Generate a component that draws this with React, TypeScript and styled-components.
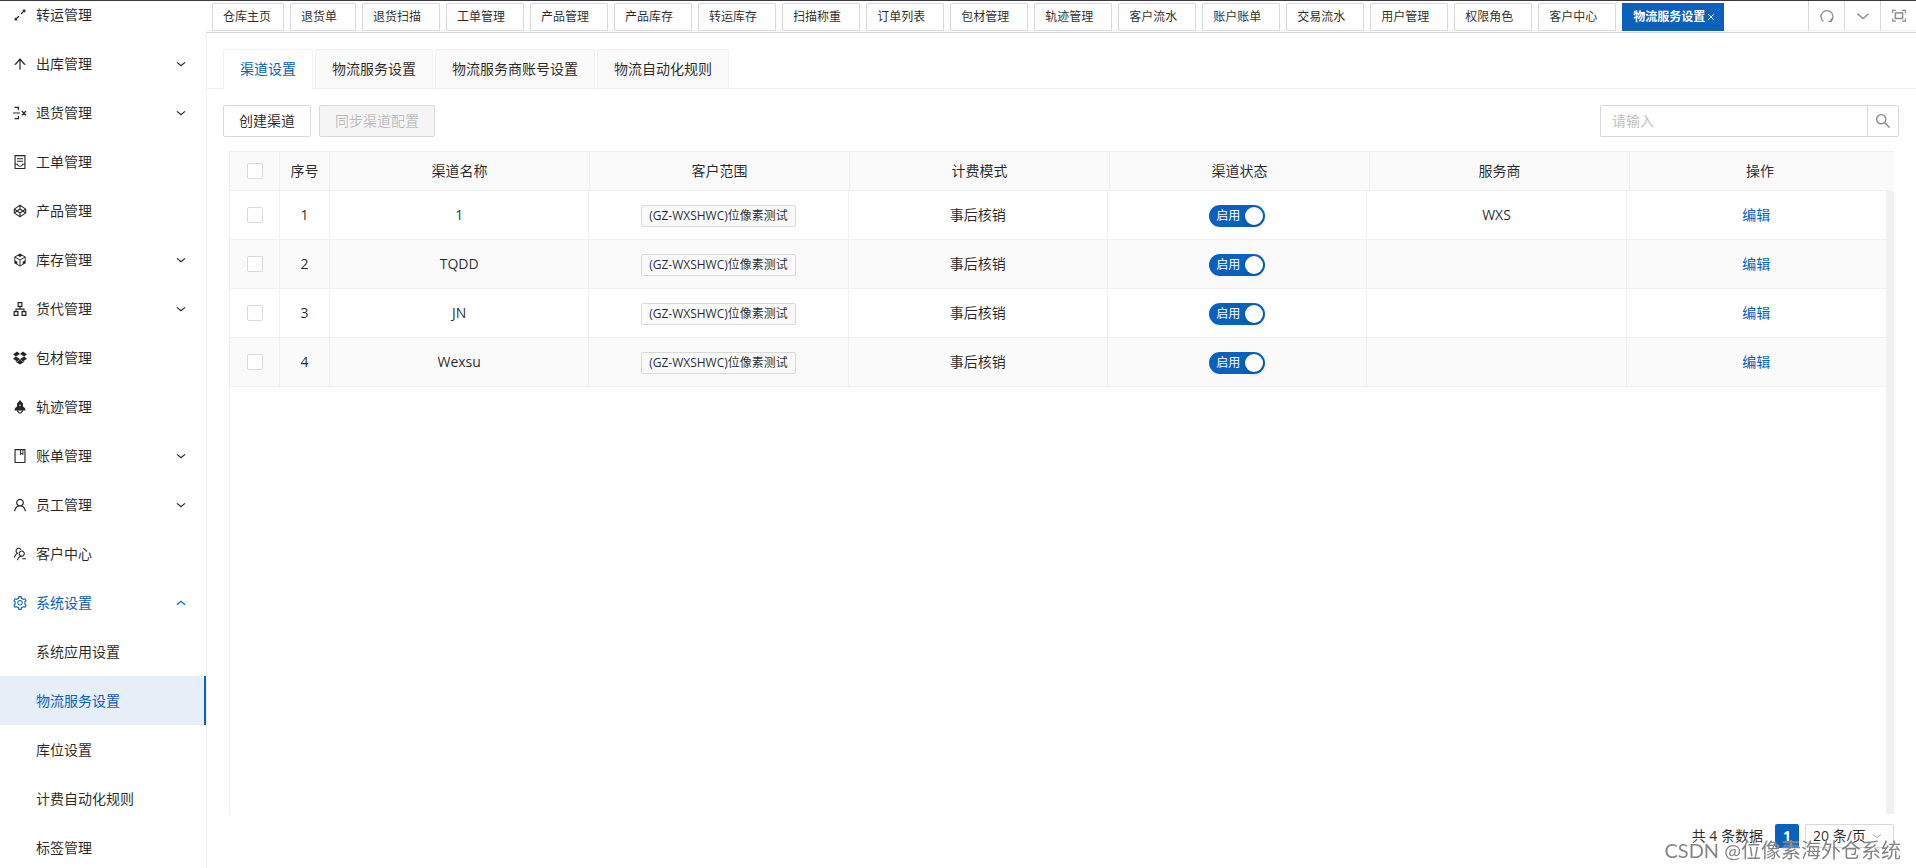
import React, { useState } from 'react';
import styled, { createGlobalStyle, css } from 'styled-components';
import {
  AiFillRocket,
  AiOutlineApartment,
  AiOutlineArrowUp,
  AiOutlineArrowsAlt,
  AiOutlineBook,
  AiOutlineCodeSandbox,
  AiOutlineCodepen,
  AiOutlineContainer,
  AiOutlineDropbox,
  AiOutlineSearch,
  AiOutlineSetting,
  AiOutlineUser,
  AiOutlineUsergroupDelete,
} from 'react-icons/ai';

const primary = '#0960bd';
const textColor = 'rgba(0, 0, 0, 0.85)';
const line = '#f0f0f0';
const border = '#d9d9d9';
const stripe = '#fafafa';

const GlobalStyle = createGlobalStyle`
  *, *::before, *::after { box-sizing: border-box; }
  body {
    margin: 0;
    background: #fff;
    color: ${textColor};
    font-family: "Open Sans", "Noto Sans CJK SC", sans-serif;
    font-size: 14px;
    line-height: 22px;
  }
  button, input, select { font: inherit; color: inherit; margin: 0; }
  a { color: inherit; text-decoration: none; }
  ul { margin: 0; padding: 0; list-style: none; }
`;

const Page = styled.div`
  display: flex;
  height: 100vh;
  overflow: hidden;
  border-top: 1px solid #3a3a44;
`;

/* Sidebar */

const Sidebar = styled.nav`
  flex: 0 0 206px;
  overflow: hidden;
`;

const MenuList = styled.ul`
  margin-top: -11px;
`;

const MenuLink = styled.a<{ $active?: boolean; $open?: boolean }>`
  display: flex;
  align-items: center;
  height: 49px;
  padding: 0 18px 0 12px;
  border-right: 2px solid transparent;
  ${(p) => p.$open && css`color: ${primary};`}
  ${(p) =>
    p.$active &&
    css`
      color: ${primary};
      background: #e6eff8;
      border-right-color: ${primary};
    `}
`;

const MenuIcon = styled.span`
  display: flex;
  width: 24px;
  font-size: 16px;
`;

const MenuText = styled.span`
  flex: 1;
`;

/* Page tags */

const Main = styled.main`
  flex: 1;
  min-width: 0;
  display: flex;
  flex-direction: column;
`;

const TagsBar = styled.div`
  height: 32px;
  flex: none;
  border-bottom: 1px solid ${border};
`;

const TagsNav = styled.div`
  display: flex;
  height: 30px;
  padding-left: 6px;
  border-bottom: 1px solid ${line};
`;

const TagsList = styled.div`
  flex: 1;
  min-width: 0;
  display: flex;
  align-items: flex-end;
  gap: 6px;
  margin-bottom: -1px;
`;

const PageTag = styled.button<{ $fixed?: boolean; $active?: boolean }>`
  display: flex;
  align-items: center;
  flex: none;
  height: 28px;
  padding: 0 ${(p) => (p.$fixed ? 12 : 18)}px 0 10px;
  background: #fff;
  border: 1px solid ${border};
  border-radius: 2px;
  font-size: 12px;
  white-space: nowrap;
  ${(p) =>
    p.$active &&
    css`
      gap: 2px;
      padding: 0 8px 0 10px;
      color: #fff;
      font-weight: 700;
      background: ${primary};
      border-color: ${primary};
      border-radius: 0;
    `}
`;

const BarButton = styled.button`
  display: flex;
  align-items: center;
  justify-content: center;
  width: 36px;
  height: 29px;
  padding: 0;
  color: #8c8c8c;
  background: none;
  border: 0;
  border-left: 1px solid ${border};
`;

/* Content */

const Content = styled.section`
  flex: 1;
  min-height: 0;
  display: flex;
  flex-direction: column;
  padding-top: 16px;
  border-left: 1px solid ${line};
`;

const CardTabs = styled.div`
  display: flex;
  gap: 2px;
  height: 40px;
  padding-left: 16px;
  border-bottom: 1px solid ${line};
`;

const CardTab = styled.button<{ $active?: boolean }>`
  height: 40px;
  padding: 0 16px;
  background: ${(p) => (p.$active ? '#fff' : stripe)};
  color: ${(p) => (p.$active ? primary : 'inherit')};
  border: 1px solid ${line};
  border-bottom-color: ${(p) => (p.$active ? '#fff' : line)};
  border-radius: 2px 2px 0 0;
`;

const Toolbar = styled.div`
  display: flex;
  gap: 8px;
  padding: 16px 17px 14px 16px;
`;

const Button = styled.button`
  height: 32px;
  padding: 0 15px;
  background: #fff;
  border: 1px solid ${border};
  border-radius: 2px;
  &:disabled {
    color: rgba(0, 0, 0, 0.25);
    background: #f5f5f5;
  }
`;

const Search = styled.form`
  display: flex;
  width: 299px;
  height: 32px;
  margin-left: auto;
  border: 1px solid ${border};
  border-radius: 2px;
`;

const SearchInput = styled.input`
  flex: 1;
  min-width: 0;
  padding: 0 11px;
  border: 0;
  outline: 0;
  background: none;
  &::placeholder { color: #bfbfbf; opacity: 1; }
`;

const SearchButton = styled.button`
  display: flex;
  align-items: center;
  justify-content: center;
  width: 31px;
  padding: 0;
  color: #8c8c8c;
  font-size: 18px;
  background: none;
  border: 0;
  border-left: 1px solid ${border};
`;

/* Table */

const TablePanel = styled.div`
  flex: 1;
  min-height: 0;
  display: flex;
  flex-direction: column;
  margin: 0 22px;
  border-left: 1px solid ${line};
`;

const TableHead = styled.div`
  padding-right: 4px;
  background: ${stripe};
  border-top: 1px solid ${line};
`;

const TableBody = styled.div`
  flex: 1;
  min-height: 0;
  display: flex;
  align-items: flex-start;
`;

const ScrollTrack = styled.div`
  flex: none;
  align-self: stretch;
  width: 8px;
  background: #f1f1f1;
`;

const Table = styled.table`
  flex: 1;
  width: 100%;
  table-layout: fixed;
  border-collapse: separate;
  border-spacing: 0;
`;

const NarrowCol = styled.col`
  width: 50px;
`;

const HeadCell = styled.th`
  height: 39px;
  padding: 0;
  font-weight: 400;
  border-bottom: 1px solid ${line};
  border-right: 1px solid ${line};
  &:last-child { border-right: 0; }
`;

const Row = styled.tr`
  &:nth-child(even) { background: ${stripe}; }
`;

const Cell = styled.td`
  height: 49px;
  padding: 0;
  text-align: center;
  border-bottom: 1px solid ${line};
  border-right: 1px solid ${line};
  &:last-child { border-right: 0; }
`;

const Checkbox = styled.input`
  display: block;
  width: 16px;
  height: 16px;
  margin: 0 auto;
  appearance: none;
  background: #fff;
  border: 1px solid ${border};
  border-radius: 2px;
  &:checked { background: ${primary}; border-color: ${primary}; }
`;

const Tag = styled.span`
  display: inline-block;
  height: 22px;
  padding: 0 7px;
  font-size: 12px;
  line-height: 20px;
  white-space: nowrap;
  vertical-align: middle;
  background: ${stripe};
  border: 1px solid ${border};
  border-radius: 2px;
`;

const SwitchLabel = styled.label<{ $on: boolean }>`
  display: inline-flex;
  flex-direction: ${(p) => (p.$on ? 'row' : 'row-reverse')};
  align-items: center;
  justify-content: space-between;
  width: 56px;
  height: 22px;
  padding: ${(p) => (p.$on ? '0 2px 0 7px' : '0 7px 0 2px')};
  color: #fff;
  font-size: 12px;
  vertical-align: middle;
  background: ${(p) => (p.$on ? primary : 'rgba(0, 0, 0, 0.25)')};
  border-radius: 11px;
`;

const SwitchKnob = styled.input`
  width: 18px;
  height: 18px;
  appearance: none;
  background: #fff;
  border-radius: 9px;
  box-shadow: 0 2px 4px rgba(0, 35, 11, 0.2);
`;

const EditLink = styled.a`
  color: ${primary};
`;

/* Pagination */

const Pagination = styled.footer`
  display: flex;
  align-items: center;
  justify-content: flex-end;
  padding: 10px 22px 20px;
`;

const PageButton = styled.button`
  width: 24px;
  height: 24px;
  margin: 0 6px 0 12px;
  padding: 0;
  color: #fff;
  font-weight: 700;
  background: ${primary};
  border: 0;
  border-radius: 2px;
`;

const SizeBox = styled.div`
  display: flex;
  align-items: center;
  width: 89px;
  height: 24px;
  padding-right: 11px;
  color: #bfbfbf;
  border: 1px solid ${border};
  border-radius: 2px;
`;

const SizeSelect = styled.select`
  flex: 1;
  min-width: 0;
  padding: 0 0 0 7px;
  color: ${textColor};
  appearance: none;
  background: none;
  border: 0;
  outline: 0;
`;

const Watermark = styled.div`
  position: fixed;
  right: 15px;
  bottom: 4px;
  color: rgba(110, 110, 110, 0.85);
  font-family: Lato, "Noto Sans CJK SC", sans-serif;
  font-size: 20px;
  line-height: 28px;
  text-shadow: 0 0 1px #fff;
  pointer-events: none;
`;

/* Icons */

const Chevron = ({ up = false, size = 10 }: { up?: boolean; size?: number }) => (
  <svg width={size} height={size} viewBox="0 0 10 10" fill="none" stroke="currentColor" strokeWidth={size > 10 ? 1 : 1.2}>
    <path d={up ? 'M1 6.8 5 3.4 9 6.8' : 'M1 3.4 5 6.8 9 3.4'} />
  </svg>
);

const ReturnIcon = () => (
  <svg width="16" height="16" viewBox="-1 -1 16 16" fill="none" stroke="currentColor" strokeWidth="1.2">
    <path d="M1.5 1.4H5.4V4M0 7H7M5.4 10V12.6H1.5M8.8 5 13 9.4M13 5 8.8 9.4" />
  </svg>
);

const ReloadIcon = () => (
  <svg width="14" height="14" viewBox="0 0 14 14" fill="none" stroke="currentColor" strokeWidth="1.3">
    <path d="M3.4 12.4A6 6 0 1 1 10.8 12.2M8.2 12.3H11.2V9.6" />
  </svg>
);

const FullscreenIcon = () => (
  <svg width="14" height="14" viewBox="0 0 14 14" fill="none" stroke="currentColor">
    <path d="M.6 4V1.3H4M10 1.3H13.4V4M13.4 9.4V12.2H10M4 12.2H.6V9.4" strokeWidth="1.2" />
    <rect x="3.4" y="3.9" width="7.2" height="5.6" strokeWidth="1.5" />
  </svg>
);

const CloseIcon = () => (
  <svg width="8" height="8" viewBox="0 0 8 8" fill="none" stroke="currentColor">
    <path d="M1 1 7 7M7 1 1 7" />
  </svg>
);

/* Data */

type MenuEntry = { text: string; icon?: React.ReactNode; group?: boolean; open?: boolean; active?: boolean };

const menu: MenuEntry[] = [
  { text: '转运管理', icon: <AiOutlineArrowsAlt /> },
  { text: '出库管理', icon: <AiOutlineArrowUp />, group: true },
  { text: '退货管理', icon: <ReturnIcon />, group: true },
  { text: '工单管理', icon: <AiOutlineContainer /> },
  { text: '产品管理', icon: <AiOutlineCodepen /> },
  { text: '库存管理', icon: <AiOutlineCodeSandbox />, group: true },
  { text: '货代管理', icon: <AiOutlineApartment />, group: true },
  { text: '包材管理', icon: <AiOutlineDropbox /> },
  { text: '轨迹管理', icon: <AiFillRocket /> },
  { text: '账单管理', icon: <AiOutlineBook />, group: true },
  { text: '员工管理', icon: <AiOutlineUser />, group: true },
  { text: '客户中心', icon: <AiOutlineUsergroupDelete /> },
  { text: '系统设置', icon: <AiOutlineSetting />, group: true, open: true },
  { text: '系统应用设置' },
  { text: '物流服务设置', active: true },
  { text: '库位设置' },
  { text: '计费自动化规则' },
  { text: '标签管理' },
];

const pageTags = [
  '仓库主页', '退货单', '退货扫描', '工单管理', '产品管理', '产品库存', '转运库存', '扫描称重', '订单列表',
  '包材管理', '轨迹管理', '客户流水', '账户账单', '交易流水', '用户管理', '权限角色', '客户中心',
];

const cardTabs = ['渠道设置', '物流服务设置', '物流服务商账号设置', '物流自动化规则'];

const headings = ['渠道名称', '客户范围', '计费模式', '渠道状态', '服务商', '操作'];

const channels = [
  { name: '1', vendor: 'WXS' },
  { name: 'TQDD', vendor: '' },
  { name: 'JN', vendor: '' },
  { name: 'Wexsu', vendor: '' },
];

const Columns = () => (
  <colgroup>
    <NarrowCol />
    <NarrowCol />
    {headings.map((h) => (
      <col key={h} />
    ))}
  </colgroup>
);

const StatusSwitch = ({ name }: { name: string }) => {
  const [on, setOn] = useState(true);
  return (
    <SwitchLabel $on={on}>
      {on ? '启用' : '停用'}
      <SwitchKnob
        type="checkbox"
        role="switch"
        aria-label={`${name} 渠道状态`}
        checked={on}
        onChange={(e) => setOn(e.target.checked)}
      />
    </SwitchLabel>
  );
};

export default function App() {
  const [tab, setTab] = useState(0);

  return (
    <>
      <GlobalStyle />
      <Page>
        <Sidebar>
          <MenuList>
            {menu.map((m) => (
              <li key={m.text}>
                <MenuLink href="#" $active={m.active} $open={m.open}>
                  <MenuIcon>{m.icon}</MenuIcon>
                  <MenuText>{m.text}</MenuText>
                  {m.group && <Chevron up={m.open} />}
                </MenuLink>
              </li>
            ))}
          </MenuList>
        </Sidebar>

        <Main>
          <TagsBar>
            <TagsNav>
              <TagsList>
                {pageTags.map((t, i) => (
                  <PageTag key={t} $fixed={i === 0}>{t}</PageTag>
                ))}
                <PageTag $active>
                  物流服务设置
                  <CloseIcon />
                </PageTag>
              </TagsList>
              <BarButton aria-label="刷新"><ReloadIcon /></BarButton>
              <BarButton aria-label="更多"><Chevron size={14} /></BarButton>
              <BarButton aria-label="全屏"><FullscreenIcon /></BarButton>
            </TagsNav>
          </TagsBar>

          <Content>
            <CardTabs role="tablist">
              {cardTabs.map((t, i) => (
                <CardTab key={t} role="tab" aria-selected={i === tab} $active={i === tab} onClick={() => setTab(i)}>
                  {t}
                </CardTab>
              ))}
            </CardTabs>

            <Toolbar>
              <Button>创建渠道</Button>
              <Button disabled>同步渠道配置</Button>
              <Search onSubmit={(e) => e.preventDefault()}>
                <SearchInput aria-label="搜索渠道" placeholder="请输入" />
                <SearchButton aria-label="搜索"><AiOutlineSearch /></SearchButton>
              </Search>
            </Toolbar>

            <TablePanel>
              <TableHead>
                <Table>
                  <Columns />
                  <thead>
                    <tr>
                      <HeadCell><Checkbox type="checkbox" aria-label="全选" /></HeadCell>
                      <HeadCell>序号</HeadCell>
                      {headings.map((h) => (
                        <HeadCell key={h}>{h}</HeadCell>
                      ))}
                    </tr>
                  </thead>
                </Table>
              </TableHead>
              <TableBody>
                <Table>
                  <Columns />
                  <tbody>
                    {channels.map((c, i) => (
                      <Row key={c.name}>
                        <Cell><Checkbox type="checkbox" aria-label={`选择 ${c.name}`} /></Cell>
                        <Cell>{i + 1}</Cell>
                        <Cell>{c.name}</Cell>
                        <Cell><Tag>(GZ-WXSHWC)位像素测试</Tag></Cell>
                        <Cell>事后核销</Cell>
                        <Cell><StatusSwitch name={c.name} /></Cell>
                        <Cell>{c.vendor}</Cell>
                        <Cell><EditLink href="#">编辑</EditLink></Cell>
                      </Row>
                    ))}
                  </tbody>
                </Table>
                <ScrollTrack />
              </TableBody>
            </TablePanel>

            <Pagination>
              <span>共 4 条数据</span>
              <PageButton aria-current="page">1</PageButton>
              <SizeBox>
                <SizeSelect aria-label="每页条数" defaultValue="20">
                  <option value="20">20 条/页</option>
                  <option value="50">50 条/页</option>
                </SizeSelect>
                <Chevron />
              </SizeBox>
            </Pagination>
          </Content>
        </Main>
      </Page>
      <Watermark>CSDN @位像素海外仓系统</Watermark>
    </>
  );
}
